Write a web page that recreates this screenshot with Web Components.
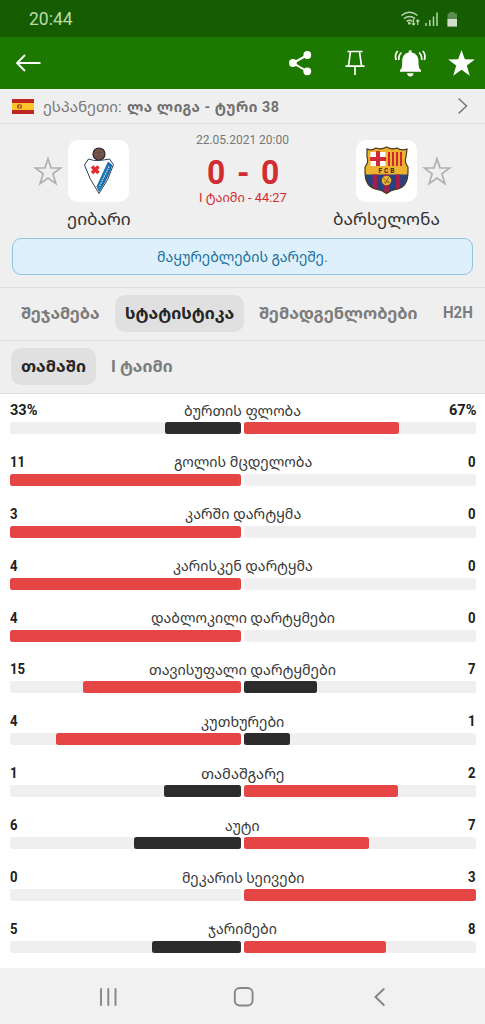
<!DOCTYPE html>
<html lang="ka">
<head>
<meta charset="utf-8">
<meta name="viewport" content="width=device-width, initial-scale=1">
<title>ეიბარი - ბარსელონა</title>
<style>
  body {
    margin: 0;
    background: #fff;
    font-family: Roboto, 'Noto Sans Georgian', 'DejaVu Sans', sans-serif;
    color: #2c2c2c;
  }
</style>
</head>
<body>
<match-screen></match-screen>

<script>
const define = (name, html, setup) => {
  customElements.define(name, class extends HTMLElement {
    connectedCallback() {
      if (this.shadowRoot) return;
      this.attachShadow({ mode: 'open' });
      this.shadowRoot.innerHTML = html;
      if (setup) setup(this, this.shadowRoot);
    }
  });
};

// One line of text, condensed or stretched to the width attribute.
define('fit-text', `
  <style>
    :host { display: block; flex: none; white-space: nowrap; }
    span { display: inline-block; transform-origin: 0 50%; }
  </style>
  <span><slot></slot></span>
`, (host, root) => {
  const width = Number(host.getAttribute('width'));
  const span = root.querySelector('span');
  host.style.width = `${width}px`;
  span.style.transform = `scaleX(${width / span.offsetWidth})`;
});

define('status-bar', `
  <style>
    :host { display: flex; box-sizing: border-box; height: 37px; padding: 0 26px 0 29px; align-items: center; justify-content: space-between; background: #165c00; color: #b9dcae; font-size: 17.5px; }
    svg { display: block; margin-top: 1px; }
  </style>
  <fit-text width="44">20:44</fit-text>
  <svg width="58" height="18" viewBox="401 10 58 18" fill="none" stroke="#b9d3b1" stroke-width="1.5">
    <path d="M401.5 15.5q8-6.5 16 0M404 18.7q5.500-4.500 11 0M406.500 21.500q3-2.500 6 0"/>
    <circle cx="409.300" cy="23.300" r=".7"/>
    <path stroke-width="1.200" d="M413.500 19v6M411.800 23.300l1.700 1.700 1.700-1.700M417.700 25v-5M416 21.600l1.700-1.700 1.700 1.700"/>
    <path d="M426 26v-3M429.800 26v-6M433.500 26V16.500M437 26V12.500"/>
    <path fill="#5c8d4e" stroke="none" d="M449.500 12h5v1.500h2.500v13h-9.500v-13h2z"/>
    <path fill="#d0e0cb" stroke="none" d="M447.500 19h9.500v7.500h-9.500z"/>
  </svg>
`);

define('app-bar', `
  <style>
    :host { display: flex; height: 52px; background: #1d7800; }
    svg { display: block; }
  </style>
  <svg width="485" height="52" viewBox="0 37 485 52" fill="none" stroke="#fff" stroke-width="1.800">
    <path d="M40.500 63H17M25 55l-8 8 8 8"/>
    <g fill="#fff"><path d="M307.500 55L293 63l14.500 8.500" fill="none" stroke-width="2"/>
      <g stroke="none"><circle cx="307.300" cy="55" r="3.900"/><circle cx="292.900" cy="63" r="3.900"/><circle cx="307.300" cy="71.300" r="3.900"/></g></g>
    <path stroke-width="1.700" d="M347.500 51.500h15M350.500 51.500L348.500 66M359.500 51.500L361.500 66M345.500 66.200h19M355 66.500V75"/>
    <path fill="#fff" stroke="none" d="M408.700 52.500v-1q0-1.300 1.500-1.300t1.500 1.300v1c4.600.8 6.800 4.300 6.800 8.500 0 5.500.5 7.500 2.500 9v1.800h-21V70c2-1.500 2.200-3.500 2.200-9 0-4.200 2-7.700 6.500-8.500zM407 73.200h6.500q-.5 3.300-3.200 3.300T407 73.200z"/>
    <path stroke-width="1.700" d="M401.500 52.500q-3.500 3.500-2.500 7.500M397.700 51q-3.500 4-1.500 9M419 52.500q3.500 3.500 2.500 7.500M422.800 51q3.500 4 1.500 9"/>
    <path fill="#fff" stroke="none" d="M461.500 50l3.300 9.300 10 .2-8 6 3 10.300-8.300-6-8.300 6 3-10.300-8-6 10-.2z"/>
  </svg>
`);

define('league-bar', `
  <style>
    :host { display: flex; box-sizing: border-box; height: 35px; padding: 0 17px 0 12px; align-items: center; border-bottom: 1px solid #e1e1e1; background: #efefef; color: #777; font-size: 14px; }
    .flag { margin-right: 9px; }
    b { color: #707070; letter-spacing: .5px; }
    .name { margin-left: 5px; }
    .go { margin-left: auto; }
  </style>
  <svg class="flag" width="22" height="15" viewBox="0 0 22 15">
    <path fill="#bd2622" d="M0 0h22v15H0z"/><path fill="#fbc52b" d="M0 4h22v7H0z"/>
    <path fill="#b85a24" d="M5 6l2-1 3 1v3l-2 1-3-1z"/><path fill="#e7b26b" d="M7 6.500h1.500v2H7z"/>
  </svg>
  <fit-text width="79">ესპანეთი:</fit-text>
  <fit-text class="name" width="152"><b>ლა ლიგა - ტური 38</b></fit-text>
  <svg class="go" width="11" height="18" fill="none" stroke="#777" stroke-width="1.500"><path d="M1.500 1.500l8 7.500-8 7.500"/></svg>
`);

define('fav-star', `
  <style>:host, svg { display: block; }</style>
  <svg width="30" height="30" fill="none" stroke="#b0b0b0" stroke-width="1.700">
    <path d="M15 2.700l3 9.100 9.700.2-7.800 5.900 3 9.700-7.900-5.600-7.900 5.600 3-9.700L2.300 12l9.700-.2z"/>
  </svg>
`);

define('team-card', `
  <style>
    :host { display: flex; flex-direction: column; align-items: center; }
    .crest { width: 61px; height: 62px; border-radius: 10px; background: #fff; }
    .name { margin-top: 6px; font-size: 17px; line-height: 22px; color: #303030; }
  </style>
  <div class="crest"><slot name="crest"></slot></div>
  <div class="name"><slot></slot></div>
`);

define('match-header', `
  <style>
    :host { display: flex; flex-direction: column; box-sizing: border-box; height: 164px; padding: 8px 12px 0; border-bottom: 1px solid #dfdfdf; background: #efefef; }
    .teams { display: flex; height: 106px; justify-content: space-between; }
    .side { display: flex; box-sizing: border-box; padding-top: 8px; width: 170px; align-items: flex-start; }
    .side.home { padding-left: 21px; }
    .side.away { justify-content: flex-end; padding-right: 21px; }
    fav-star { margin-top: 16px; }
    team-card { width: 61px; }
    .home team-card { margin-left: 5px; }
    .away team-card { margin-right: 5px; }
    .info { display: flex; flex-direction: column; align-items: center; color: #d22c31; }
    .date { color: #777; font-size: 13px; line-height: 16px; }
    .score { margin-top: 6px; font-size: 34px; line-height: 36px; font-weight: 700; word-spacing: 4px; }
    .time { font-size: 12.5px; line-height: 15px; }
    .note { display: flex; box-sizing: border-box; height: 37px; padding-bottom: 1px; align-items: center; justify-content: center; border: 1px solid #8ec6e0; border-radius: 9px; background: #ddf0fc; color: #20719d; font-size: 14px; }
    .crest-svg { display: block; }
  </style>
  <div class="teams">
    <div class="side home">
      <fav-star></fav-star>
      <team-card>
        <svg slot="crest" class="crest-svg" width="61" height="62">
          <circle cx="31" cy="14" r="6" fill="#79564a" stroke="#252735" stroke-width="1.200"/>
          <path d="M26.500 13q4.500-2 9 0M26.500 16q4.500 2 9 0M31 9v10" fill="none" stroke="#5d443d" stroke-width=".6"/>
          <path d="M20.500 19q5 2 10.500 1.500T41.500 19l4 5.500Q41 40 31 53.500 21 39 16.500 25z" fill="#fff" stroke="#303d55" stroke-width="1"/>
          <path d="M40 21.500l4.500 3.500Q40 39 31 52L28.500 46.500z" fill="#1870ae"/>
          <path d="M41 26.500l-10 21" stroke="#b7d4e7" stroke-width="1.500" stroke-dasharray="1.500 1"/>
          <path d="M24 26.500l6.500 6.500M30.500 26.500L24 33" stroke="#e5292d" stroke-width="3.400"/>
        </svg>
        <fit-text width="64">ეიბარი</fit-text>
      </team-card>
    </div>
    <div class="info">
      <fit-text class="date" width="93">22.05.2021 20:00</fit-text>
      <fit-text class="score" width="72">0 - 0</fit-text>
      <fit-text class="time" width="88">I ტაიმი - 44:27</fit-text>
    </div>
    <div class="side away">
      <team-card>
        <svg slot="crest" class="crest-svg" width="61" height="62">
          <defs><clipPath id="shield"><path d="M11 9q5 2 9-1 5 2 10.500-1 5.500 3 10.500 1 4 3 10 1l-1 8q-2 5 2 10v5q0 14-10 17-7 1-11.500 4.500Q26 50 19 49 9 46 9 32v-5q4-5 2-10z"/></clipPath></defs>
          <g clip-path="url(#shield)">
            <path fill="#edb32f" d="M8 6h46v48H8z"/>
            <path fill="#fff" d="M14.500 12h15v14h-15z"/>
            <path fill="#d32836" d="M20 11h4v15h-4zM14 17h16v4H14z"/>
            <path stroke="#cf2637" stroke-width="2" d="M33 12v14M37 12v14M41 12v14M45 12v14"/>
            <path fill="#28417f" d="M8 34.500h46v20H8z"/>
            <path stroke="#a51e48" stroke-width="4.500" d="M19 34.500v18M30.500 34.500v20M42 34.500v18"/>
            <circle cx="30.500" cy="40.500" r="4.800" fill="#edb32f"/>
            <path fill="none" stroke="#7b612e" stroke-width=".8" d="M27 38l7 5M33 37l-4 7M28 42h5"/>
          </g>
          <path d="M11 9q5 2 9-1 5 2 10.500-1 5.500 3 10.500 1 4 3 10 1l-1 8q-2 5 2 10v5q0 14-10 17-7 1-11.500 4.500Q26 50 19 49 9 46 9 32v-5q4-5 2-10z" fill="none" stroke="#493a20" stroke-width="1.200"/>
          <text x="22.500" y="32.500" font-size="6.500" font-weight="700" fill="#30291b" textLength="16">FCB</text>
        </svg>
        <fit-text width="107">ბარსელონა</fit-text>
      </team-card>
      <fav-star></fav-star>
    </div>
  </div>
  <div class="note"><fit-text width="171">მაყურებლების გარეშე.</fit-text></div>
`);

define('tab-item', `
  <style>
    :host { display: flex; box-sizing: border-box; height: 37px; padding: 0 10px 2px; align-items: center; border-radius: 10px; color: #7c7c7c; font-size: 16px; font-weight: 700; }
    :host([active]) { background: #e0e0e0; color: #252525; }
  </style>
  <slot></slot>
`);

define('tab-row', `
  <style>
    :host { display: flex; box-sizing: border-box; height: 53px; padding: 0 0 1px 11px; align-items: center; gap: 5px; border-bottom: 1px solid #dcdcdc; background: #efefef; overflow: hidden; }
  </style>
  <slot></slot>
`);

define('stat-row', `
  <style>
    :host { display: block; height: 51.900px; }
    .text { display: flex; box-sizing: border-box; height: 20px; padding-bottom: 2px; align-items: center; font-size: 14px; color: #383838; }
    .home, .away { flex: 1; display: flex; font-weight: 700; color: #202020; }
    .away { justify-content: flex-end; }
    .bars { display: flex; gap: 2.500px; margin-top: 1px; }
    .track { display: flex; flex: 1; height: 12px; border-radius: 2.500px; background: #efefef; }
    .track:first-child { justify-content: flex-end; }
    .fill { border-radius: 2.500px; background: #2c2c2c; }
    .fill.lead { background: #e54545; }
  </style>
  <div class="text"><div class="home"></div><div class="label"></div><div class="away"></div></div>
  <div class="bars"><div class="track"><div class="fill"></div></div><div class="track"><div class="fill"></div></div></div>
`, (host, root) => {
  const home = host.getAttribute('home');
  const away = host.getAttribute('away');
  const values = [parseInt(home), parseInt(away)];
  const digits = text => `<fit-text width="${text.includes('%') ? 27 : text.length * 7.500}">${text}</fit-text>`;
  root.querySelector('.home').innerHTML = digits(home);
  root.querySelector('.away').innerHTML = digits(away);
  root.querySelector('.label').innerHTML = `<fit-text width="${host.getAttribute('size')}">${host.getAttribute('label')}</fit-text>`;
  root.querySelectorAll('.fill').forEach((fill, i) => {
    fill.style.width = `${values[i] / (values[0] + values[1]) * 100}%`;
    fill.classList.toggle('lead', values[i] > values[1 - i]);
  });
});

define('stat-list', `
  <style>:host { display: block; box-sizing: border-box; height: 574px; padding: 7px 9.500px 0 9.500px; overflow: hidden; }</style>
  <div></div>
`, (host, root) => {
  const stats = [
    ['33%', 'ბურთის ფლობა', '67%', 117],
    ['11', 'გოლის მცდელობა', '0', 138],
    ['3', 'კარში დარტყმა', '0', 116],
    ['4', 'კარისკენ დარტყმა', '0', 140],
    ['4', 'დაბლოკილი დარტყმები', '0', 184],
    ['15', 'თავისუფალი დარტყმები', '7', 187],
    ['4', 'კუთხურები', '1', 83],
    ['1', 'თამაშგარე', '2', 83],
    ['6', 'აუტი', '7', 35],
    ['0', 'მეკარის სეივები', '3', 122],
    ['5', 'ჯარიმები', '8', 69]
  ];
  root.querySelector('div').innerHTML = stats.map(([home, label, away, size]) =>
    `<stat-row home="${home}" label="${label}" away="${away}" size="${size}"></stat-row>`).join('');
});

define('nav-bar', `
  <style>:host { display: flex; height: 56px; background: #f1f1f1; } svg { display: block; }</style>
  <svg width="485" height="56" viewBox="0 968 485 56" fill="none" stroke="#858585" stroke-width="1.900" stroke-linecap="round">
    <path d="M101 989v16M108.300 989v16M115.500 989v16"/>
    <rect x="234.800" y="988" width="17.800" height="17.500" rx="5"/>
    <path d="M383.800 989l-8.300 8 8.300 8"/>
  </svg>
`);

define('match-screen', `
  <style>:host { display: flex; flex-direction: column; width: 485px; height: 1024px; overflow: hidden; }</style>
  <status-bar></status-bar>
  <app-bar></app-bar>
  <league-bar></league-bar>
  <match-header></match-header>
  <tab-row>
    <tab-item><fit-text width="79">შეჯამება</fit-text></tab-item>
    <tab-item active><fit-text width="109">სტატისტიკა</fit-text></tab-item>
    <tab-item><fit-text width="159">შემადგენლობები</fit-text></tab-item>
    <tab-item><fit-text width="30">H2H</fit-text></tab-item>
  </tab-row>
  <tab-row>
    <tab-item active><fit-text width="65">თამაში</fit-text></tab-item>
    <tab-item><fit-text width="62">I ტაიმი</fit-text></tab-item>
  </tab-row>
  <stat-list></stat-list>
  <nav-bar></nav-bar>
`);
</script>
</body>
</html>
